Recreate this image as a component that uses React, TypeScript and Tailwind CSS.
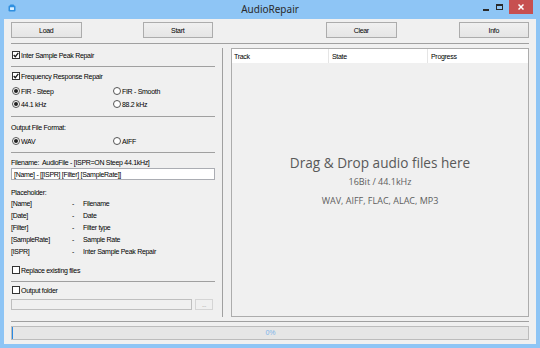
import React from "react";

const small = "font-['Liberation_Sans',Arial,sans-serif] text-[7px] tracking-[-0.3px] text-black leading-none";

function Check({ checked }: { checked?: boolean }) {
  return (
    <span className="w-[8px] h-[8px] border border-[#333333] bg-white flex items-center justify-center shrink-0">
      {checked && (
        <svg width="6" height="6" viewBox="0 0 6 6">
          <path d="M0.7 3 L2.3 4.7 L5.3 0.9" stroke="#1a1a1a" strokeWidth="1.3" fill="none" />
        </svg>
      )}
    </span>
  );
}

function Radio({ checked }: { checked?: boolean }) {
  return (
    <span className="w-[8px] h-[8px] rounded-full border border-[#555555] bg-white flex items-center justify-center shrink-0">
      {checked && <span className="w-[4px] h-[4px] rounded-full bg-[#222222]" />}
    </span>
  );
}

function Sep() {
  return <div className="h-px bg-[#a0a0a0] shrink-0" />;
}

function Btn({ label, className }: { label: string; className?: string }) {
  return (
    <div
      className={
        "w-[71px] h-[16px] border border-[#acacac] bg-gradient-to-b from-[#f0f0f0] to-[#e5e5e5] flex items-center justify-center " +
        small +
        " " +
        (className ?? "")
      }
    >
      {label}
    </div>
  );
}

export default function App() {
  const rows: [string, string][] = [
    ["[Name]", "Filename"],
    ["[Date]", "Date"],
    ["[Filter]", "Filter type"],
    ["[SampleRate]", "Sample Rate"],
    ["[ISPR]", "Inter Sample Peak Repair"],
  ];
  return (
    <div className="w-[540px] h-[348px] bg-[#8ec5f5] flex flex-col overflow-hidden">
      {/* Title bar */}
      <div className="h-[19px] grid grid-cols-[1fr_auto_1fr] shrink-0">
        <div className="flex items-start pl-[8px] pt-[4px]">
          <svg width="8" height="8" viewBox="0 0 8 8">
            <rect x="0.5" y="1.5" width="7" height="6" rx="1.2" fill="#2f8fe0" />
            <rect x="2" y="0.5" width="4" height="2" rx="0.6" fill="#2f8fe0" />
            <rect x="2" y="3.2" width="4" height="2.8" rx="0.4" fill="#d9efff" />
          </svg>
        </div>
        <div className="flex items-center justify-center font-['Noto_Sans','Open_Sans',sans-serif] text-[10px] text-[#2a2a2a] pb-[1px]">
          AudioRepair
        </div>
        <div className="flex items-start justify-end pr-[7px]">
          <div className="w-[6px] h-[2px] bg-[#2a2a2a] mt-[9px]" />
          <div className="w-[7px] h-[6px] border border-[#2a2a2a] border-t-2 mt-[4px] ml-[7px]" />
          <div className="w-[24px] h-[14px] bg-[#c75050] ml-[6px] flex items-center justify-center">
            <svg width="6" height="6" viewBox="0 0 6 6">
              <path d="M0.5 0.5 L5.5 5.5 M5.5 0.5 L0.5 5.5" stroke="#ffffff" strokeWidth="1.5" />
            </svg>
          </div>
        </div>
      </div>

      {/* Content */}
      <div className="mx-[4px] mb-[4px] flex-1 bg-[#f0f0f0] flex flex-col px-[7px] pt-[3px]">
        <div className="flex h-[16px] shrink-0">
          <Btn label="Load" />
          <Btn label="Start" className="ml-[61px] w-[70px]" />
          <Btn label="Clear" className="ml-[113px] w-[70px]" />
          <Btn label="Info" className="ml-[62px] w-[70px]" />
        </div>
        <div className="mt-[5px]">
          <Sep />
        </div>

        {/* Main */}
        <div className="mt-[4px] h-[269px] flex shrink-0">
          {/* Left panel */}
          <div className={"w-[204px] flex flex-col " + small}>
            <div className="mt-[1px] h-[12px] flex items-center gap-[1px] pl-[1px]">
              <Check checked />
              <span>Inter Sample Peak Repair</span>
            </div>
            <div className="mt-[5px]">
              <Sep />
            </div>
            <div className="mt-[3px] h-[12px] flex items-center gap-[1px] pl-[1px]">
              <Check checked />
              <span>Frequency Response Repair</span>
            </div>
            <div className="mt-[3px] h-[12px] flex items-center">
              <div className="w-[102px] flex items-center gap-[1px] pl-[1px]">
                <Radio checked />
                <span>FIR - Steep</span>
              </div>
              <div className="flex items-center gap-[1px]">
                <Radio />
                <span>FIR - Smooth</span>
              </div>
            </div>
            <div className="mt-[1px] h-[12px] flex items-center">
              <div className="w-[102px] flex items-center gap-[1px] pl-[1px]">
                <Radio checked />
                <span>44.1 kHz</span>
              </div>
              <div className="flex items-center gap-[1px]">
                <Radio />
                <span>88.2 kHz</span>
              </div>
            </div>
            <div className="mt-[6px]">
              <Sep />
            </div>
            <div className="mt-[4px] h-[12px] flex items-center">Output File Format:</div>
            <div className="mt-[2px] h-[12px] flex items-center">
              <div className="w-[102px] flex items-center gap-[1px] pl-[1px]">
                <Radio checked />
                <span>WAV</span>
              </div>
              <div className="flex items-center gap-[1px]">
                <Radio />
                <span>AIFF</span>
              </div>
            </div>
            <div className="mt-[5px]">
              <Sep />
            </div>
            <div className="mt-[4px] h-[10px] flex items-center whitespace-pre">
              Filename:  AudioFile - [ISPR=ON Steep 44.1kHz]
            </div>
            <div className="mt-[1px] h-[12px] border border-[#abadb3] bg-white flex items-center pl-[2px]">
              [Name] - [[ISPR] [Filter] [SampleRate]]
            </div>
            <div className="mt-[7px] h-[10px] flex items-center">Placeholder:</div>
            <div className="flex flex-col">
              {rows.map(([a, b]) => (
                <div key={a} className="h-[12px] flex items-center">
                  <span className="w-[61px]">{a}</span>
                  <span className="w-[11px]">-</span>
                  <span>{b}</span>
                </div>
              ))}
            </div>
            <div className="mt-[7px] h-[12px] flex items-center gap-[1px] pl-[1px]">
              <Check />
              <span>Replace existing files</span>
            </div>
            <div className="mt-[5px]">
              <Sep />
            </div>
            <div className="mt-[2px] h-[12px] flex items-center gap-[1px] pl-[1px]">
              <Check />
              <span>Output folder</span>
            </div>
            <div className="mt-[3px] h-[11px] flex">
              <div className="w-[181px] h-full border border-[#bfbfbf] bg-[#f0f0f0]" />
              <div className="ml-[3px] w-[18px] h-full border border-[#d5d5d5] bg-[#f0f0f0] flex items-center justify-center text-[#8a8a8a] text-[6px]">
                ...
              </div>
            </div>
          </div>

          {/* Divider */}
          <div className="ml-[7px] w-px h-full bg-[#a0a0a0]" />

          {/* List */}
          <div className="ml-[8px] flex-1 border border-[#acacac] bg-[#f0f0f0] flex flex-col">
            <div className={"h-[14px] bg-white flex shrink-0 " + small}>
              <div className="w-[97px] border-r border-[#e5e5e5] flex items-center pl-[2px]">Track</div>
              <div className="w-[99px] border-r border-[#e5e5e5] flex items-center pl-[3px]">State</div>
              <div className="flex-1 flex items-center pl-[3px]">Progress</div>
            </div>
            <div className="flex flex-col items-center pt-[91px]">
              <div className="h-[18px] flex items-center font-['Open_Sans','Noto_Sans',sans-serif] text-[13.6px] text-[#595959]">
                Drag &amp; Drop audio files here
              </div>
              <div className="mt-[4px] h-[12px] flex items-center font-['Open_Sans','Noto_Sans',sans-serif] text-[9px] text-[#5e5e5e]">
                16Bit / 44.1kHz
              </div>
              <div className="mt-[7px] h-[12px] flex items-center font-['Open_Sans','Noto_Sans',sans-serif] text-[9px] text-[#5e5e5e]">
                WAV, AIFF, FLAC, ALAC, MP3
              </div>
            </div>
          </div>
        </div>

        <div className="mt-[4px]">
          <Sep />
        </div>
        <div className="mt-[4px] h-[14px] border border-[#bcbcbc] bg-[#e6e6e6] flex items-center relative shrink-0">
          <div className="w-[1px] h-full bg-[#2b8ae3]" />
          <div className="flex-1 flex items-center justify-center font-['Liberation_Sans',Arial,sans-serif] text-[7px] text-[#7db4ea]">
            0%
          </div>
        </div>
      </div>
    </div>
  );
}
